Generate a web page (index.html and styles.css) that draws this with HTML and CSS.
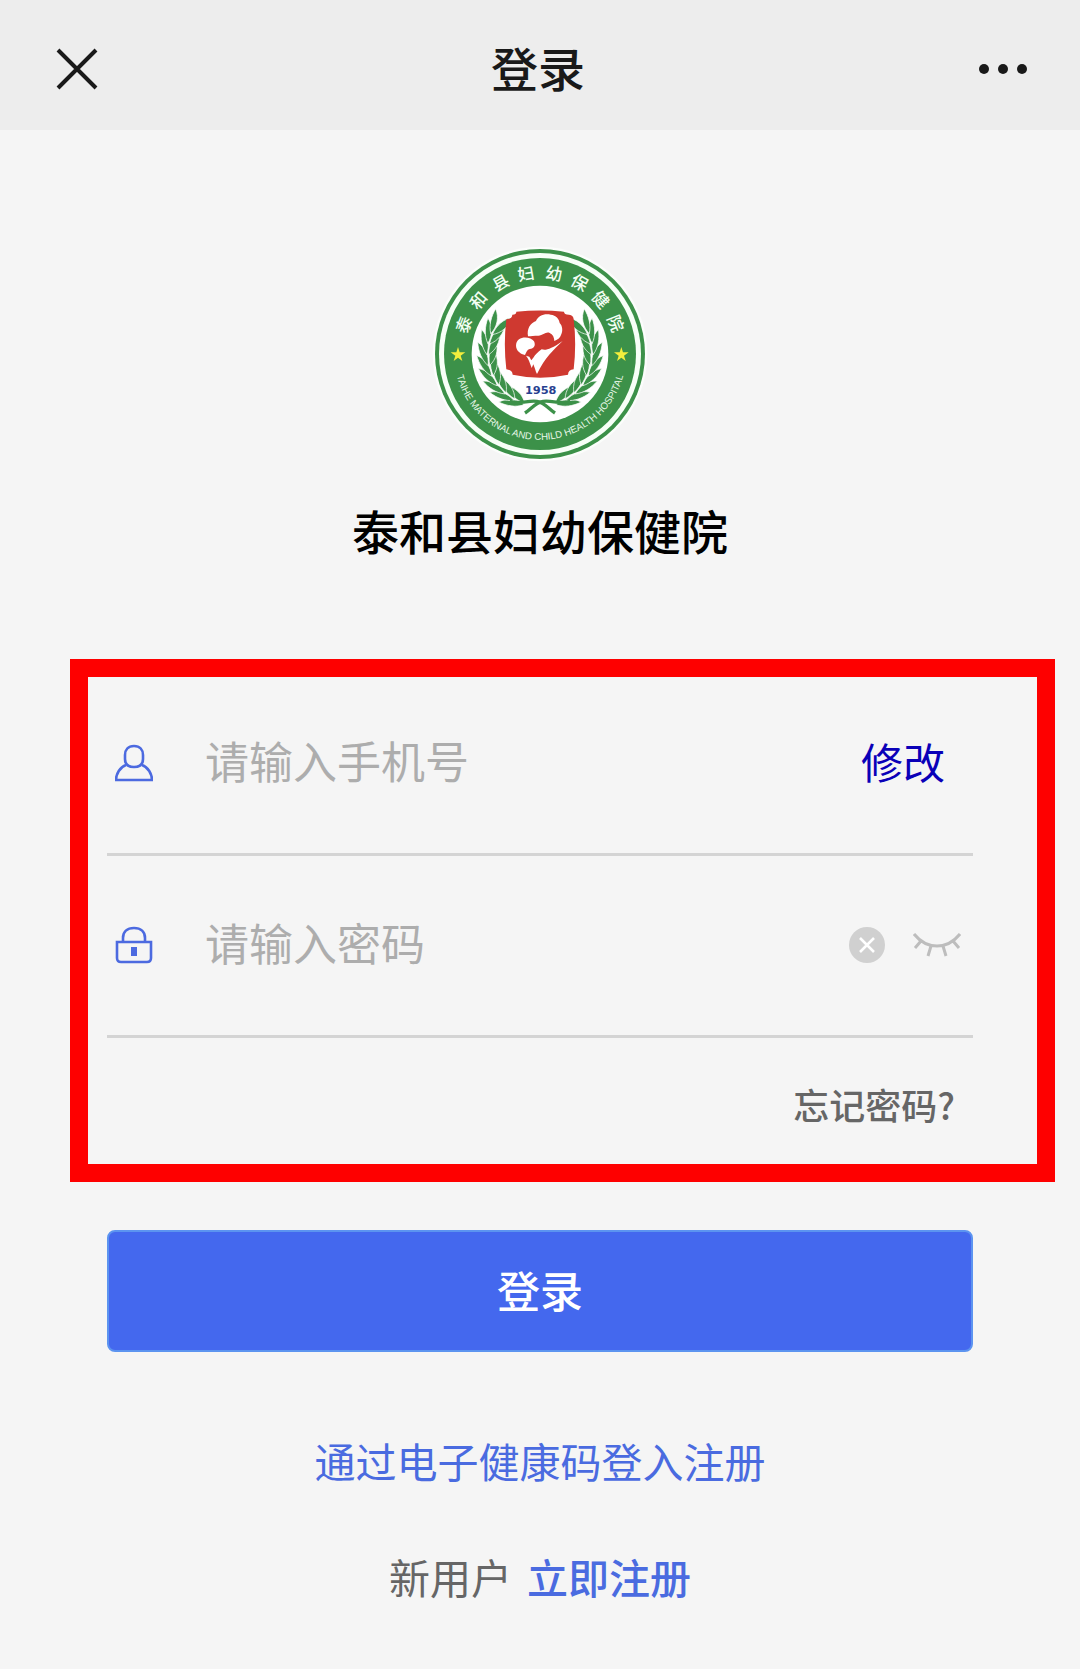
FILE: index.html
```html
<!DOCTYPE html>
<html lang="zh-CN">
<head>
    <meta charset="UTF-8">
    <meta name="viewport" content="width=device-width, initial-scale=1.0">
    <title>登录</title>
    <link rel="stylesheet" href="styles.css">
</head>
<body>
    <header class="navbar">
        <button class="icon-button" type="button" aria-label="关闭">
            <svg width="42" height="42" viewBox="0 0 42 42" fill="none" stroke="#191919" stroke-width="4">
                <path d="M2 2 40 40M40 2 2 40"/>
            </svg>
        </button>
        <h1>登录</h1>
        <button class="icon-button" type="button" aria-label="更多">
            <svg width="50" height="12" viewBox="0 0 50 12" fill="#191919">
                <circle cx="6" cy="6" r="5"/>
                <circle cx="25" cy="6" r="5"/>
                <circle cx="44" cy="6" r="5"/>
            </svg>
        </button>
    </header>

    <main>
        <div class="hospital">
            <svg class="logo" viewBox="35 32 648 648" role="img" aria-label="泰和县妇幼保健院">
                <defs>
                    <path id="motto" d="M101 356A258 258 0 0 0 617 356"/>
                    <!-- one pair of leaves, sitting at the bottom of the wreath -->
                    <g id="leaf">
                        <path d="M372 515C344 508 318 514 298 536C326 538 352 532 372 515Z"/>
                        <path d="M372 510C356 488 332 478 300 480C314 500 340 512 372 510Z"/>
                    </g>
                    <g id="branch">
                        <use href="#leaf" transform="rotate(22 359 356)"/>
                        <use href="#leaf" transform="rotate(34 359 356)"/>
                        <use href="#leaf" transform="rotate(46 359 356)"/>
                        <use href="#leaf" transform="rotate(58 359 356)"/>
                        <use href="#leaf" transform="rotate(70 359 356)"/>
                        <use href="#leaf" transform="rotate(82 359 356)"/>
                        <use href="#leaf" transform="rotate(94 359 356)"/>
                        <use href="#leaf" transform="rotate(106 359 356)"/>
                        <use href="#leaf" transform="rotate(117 359 356)"/>
                    </g>
                </defs>
                <circle cx="359" cy="356" r="322" fill="#fbfdfb"/>
                <circle cx="359" cy="356" r="315" fill="#3c9149"/>
                <circle cx="359" cy="356" r="303" fill="#f7fff7"/>
                <circle cx="359" cy="356" r="288" fill="#3c9149"/>
                <circle cx="359" cy="356" r="205" fill="#fff"/>

                <g class="logo-name">
                    <text x="359" y="130" transform="rotate(-69 359 356)">泰</text>
                    <text x="359" y="130" transform="rotate(-49 359 356)">和</text>
                    <text x="359" y="130" transform="rotate(-29 359 356)">县</text>
                    <text x="359" y="130" transform="rotate(-10 359 356)">妇</text>
                    <text x="359" y="130" transform="rotate(10 359 356)">幼</text>
                    <text x="359" y="130" transform="rotate(29 359 356)">保</text>
                    <text x="359" y="130" transform="rotate(48 359 356)">健</text>
                    <text x="359" y="130" transform="rotate(68 359 356)">院</text>
                </g>
                <text class="logo-motto"><textPath href="#motto" startOffset="50%">TAIHE MATERNAL AND CHILD HEALTH HOSPITAL</textPath></text>

                <g fill="#f3ee3d">
                    <path id="star" d="M113 335L118 351H135L121 361L126 377L113 367L100 377L105 361L91 351H108Z"/>
                    <use href="#star" x="490"/>
                </g>

                <g fill="#3c9149" stroke="#fff" stroke-width="2">
                    <use href="#branch"/>
                    <use href="#branch" transform="translate(718 0) scale(-1 1)"/>
                </g>
                <g fill="none" stroke="#3c9149" stroke-width="10">
                    <path d="M268 498C300 508 322 494 350 498C374 502 384 520 404 533"/>
                    <path d="M450 498C418 508 396 494 368 498C344 502 334 520 314 533"/>
                </g>

                <path fill="#cf3930" d="M276 238Q288 238 288 229Q359 222 431 229Q431 238 446 238Q460 240 460 252Q469 327 460 402Q444 403 443 418Q359 436 277 418Q276 404 258 402Q249 327 258 252Q275 251 276 238Z"/>
                <g fill="#fff">
                    <path d="M323 303C319 280 330 263 347 257C353 241 373 233 391 238C407 240 416 250 418 263C427 272 428 288 422 299C420 307 413 313 402 317C402 306 397 297 388 293C376 288 369 301 354 301C341 301 332 302 323 303Z"/>
                    <path d="M297 351C284 342 284 320 296 312C309 303 333 306 341 318C347 331 341 340 328 341C320 343 318 351 314 359C307 358 301 355 297 351Z"/>
                    <path d="M317 361L327 364L333 375L340 366C343 359 353 350 364 342C376 346 391 342 427 317C400 344 374 366 350 416C345 407 344 398 339 387L334 398C328 382 325 370 317 361Z"/>
                </g>
                <text class="logo-year" x="361" y="475">1958</text>
            </svg>
            <h2>泰和县妇幼保健院</h2>
        </div>

        <form class="login-form">
            <div class="fields">
                <div class="field">
                    <label for="phone" aria-label="手机号">
                        <svg width="38" height="38" viewBox="0 0 38 38" fill="none" stroke="#4c6ae0" stroke-width="2.6">
                            <path d="M19 2C13 2 10 6 10 11V15C10 20 13 23 19 23S28 20 28 15V11C28 6 25 2 19 2Z"/>
                            <path d="M11 21C5 23 1 30 1 36H37C37 30 33 23 27 21"/>
                        </svg>
                    </label>
                    <input type="tel" id="phone" placeholder="请输入手机号">
                    <a class="edit-link" href="#">修改</a>
                </div>
                <div class="field">
                    <label for="password" aria-label="密码">
                        <svg width="38" height="38" viewBox="0 0 38 38" fill="none" stroke="#4c6ae0" stroke-width="2.6">
                            <path d="M8 16V12C8 6 12 2 19 2S30 6 30 12V16"/>
                            <path d="M2 16H36V32Q36 36 32 36H6Q2 36 2 32Z"/>
                            <path d="M16 21H22V30H16Z" fill="#4c6ae0" stroke="none"/>
                        </svg>
                    </label>
                    <input type="password" id="password" placeholder="请输入密码">
                    <div class="field-tools">
                        <button class="icon-button" type="button" aria-label="清除">
                            <svg width="36" height="36" viewBox="0 0 36 36">
                                <circle cx="18" cy="18" r="18" fill="#d0d0d0"/>
                                <path d="M11 11 25 25M25 11 11 25" stroke="#fff" stroke-width="2.6"/>
                            </svg>
                        </button>
                        <button class="icon-button" type="button" aria-label="显示密码">
                            <svg width="48" height="24" viewBox="0 0 48 24" fill="none" stroke="#bdbdbd" stroke-width="3">
                                <path d="M1 1C14 17 34 17 47 1M8 8 2 15M18 13 15 23M30 13 33 23M40 8 46 15"/>
                            </svg>
                        </button>
                    </div>
                </div>
                <a class="forgot-link" href="#">忘记密码?</a>
            </div>

            <button class="login-button" type="submit">登录</button>
        </form>

        <div class="links">
            <a href="#">通过电子健康码登入注册</a>
            <p>新用户 <a class="register-link" href="#">立即注册</a></p>
        </div>
    </main>
</body>
</html>
```

FILE: styles.css
```css
* {
    box-sizing: border-box;
}

body {
    margin: 0;
    background: #f5f5f5;
    color: #000;
    font-family: "Noto Sans CJK SC", sans-serif;
}

h1, h2, p {
    margin: 0;
}

a {
    color: #4a6be0;
    text-decoration: none;
}

svg {
    display: block;
}

.icon-button {
    padding: 0;
    border: none;
    background: none;
    cursor: pointer;
}

.navbar {
    display: flex;
    justify-content: space-between;
    align-items: center;
    height: 130px;
    padding: 8px 52px 0 56px;
    background: #ededed;
}

.navbar h1 {
    padding-bottom: 4px;
    color: #191919;
    font-size: 47px;
    font-weight: 500;
    line-height: 64px;
}

.hospital {
    display: flex;
    flex-direction: column;
    align-items: center;
    gap: 36px;
    padding-top: 116px;
}

.logo {
    width: 216px;
    height: 216px;
}

.logo-name {
    fill: #f4fff4;
    font-size: 50px;
    font-weight: 500;
    text-anchor: middle;
}

.logo-motto {
    fill: #e8f8e8;
    font-family: "Liberation Sans", sans-serif;
    font-size: 29px;
    text-anchor: middle;
}

.logo-year {
    fill: #27408f;
    font-family: "DejaVu Sans", sans-serif;
    font-size: 34px;
    font-weight: bold;
    text-anchor: middle;
}

.hospital h2 {
    font-size: 47px;
    font-weight: 500;
    line-height: 64px;
}

.fields {
    display: flex;
    flex-direction: column;
    gap: 3px;
    margin: 97px 25px 0 70px;
    padding: 0 64px 32px 19px;
    border: 18px solid #fe0000;
}

.field {
    display: flex;
    align-items: center;
    padding: 43px 0 47px 8px;
    border-bottom: 3px solid #d4d4d4;
}

.field input {
    flex: 1;
    min-width: 0;
    height: 86px;
    margin-left: 52px;
    padding: 0 0 6px;
    border: none;
    outline: none;
    background: none;
    color: #333;
    font-family: inherit;
    font-size: 44px;
}

.field input::placeholder {
    color: #adadad;
}

.edit-link {
    padding: 0 28px 6px 0;
    color: #0a00b8;
    font-size: 42px;
}

.field-tools {
    display: flex;
    align-items: center;
    gap: 28px;
    padding-right: 12px;
}

.forgot-link {
    align-self: flex-end;
    margin-top: 37px;
    margin-bottom: 2px;
    padding-right: 18px;
    color: #666;
    font-size: 36px;
    font-weight: 500;
    line-height: 52px;
}

.login-button {
    display: block;
    width: calc(100% - 214px);
    height: 122px;
    margin: 48px auto 0 107px;
    padding-bottom: 6px;
    border: 2px solid #5c94f0;
    border-radius: 8px;
    background: #4468ee;
    color: #fff;
    font-family: inherit;
    font-size: 43px;
    font-weight: 500;
    cursor: pointer;
}

.links {
    display: flex;
    flex-direction: column;
    align-items: center;
    gap: 56px;
    padding: 78px 0 60px;
    font-size: 41px;
    line-height: 60px;
}

.links p {
    color: #666;
}

.links .register-link {
    margin-left: 6px;
    font-weight: 500;
}
```
